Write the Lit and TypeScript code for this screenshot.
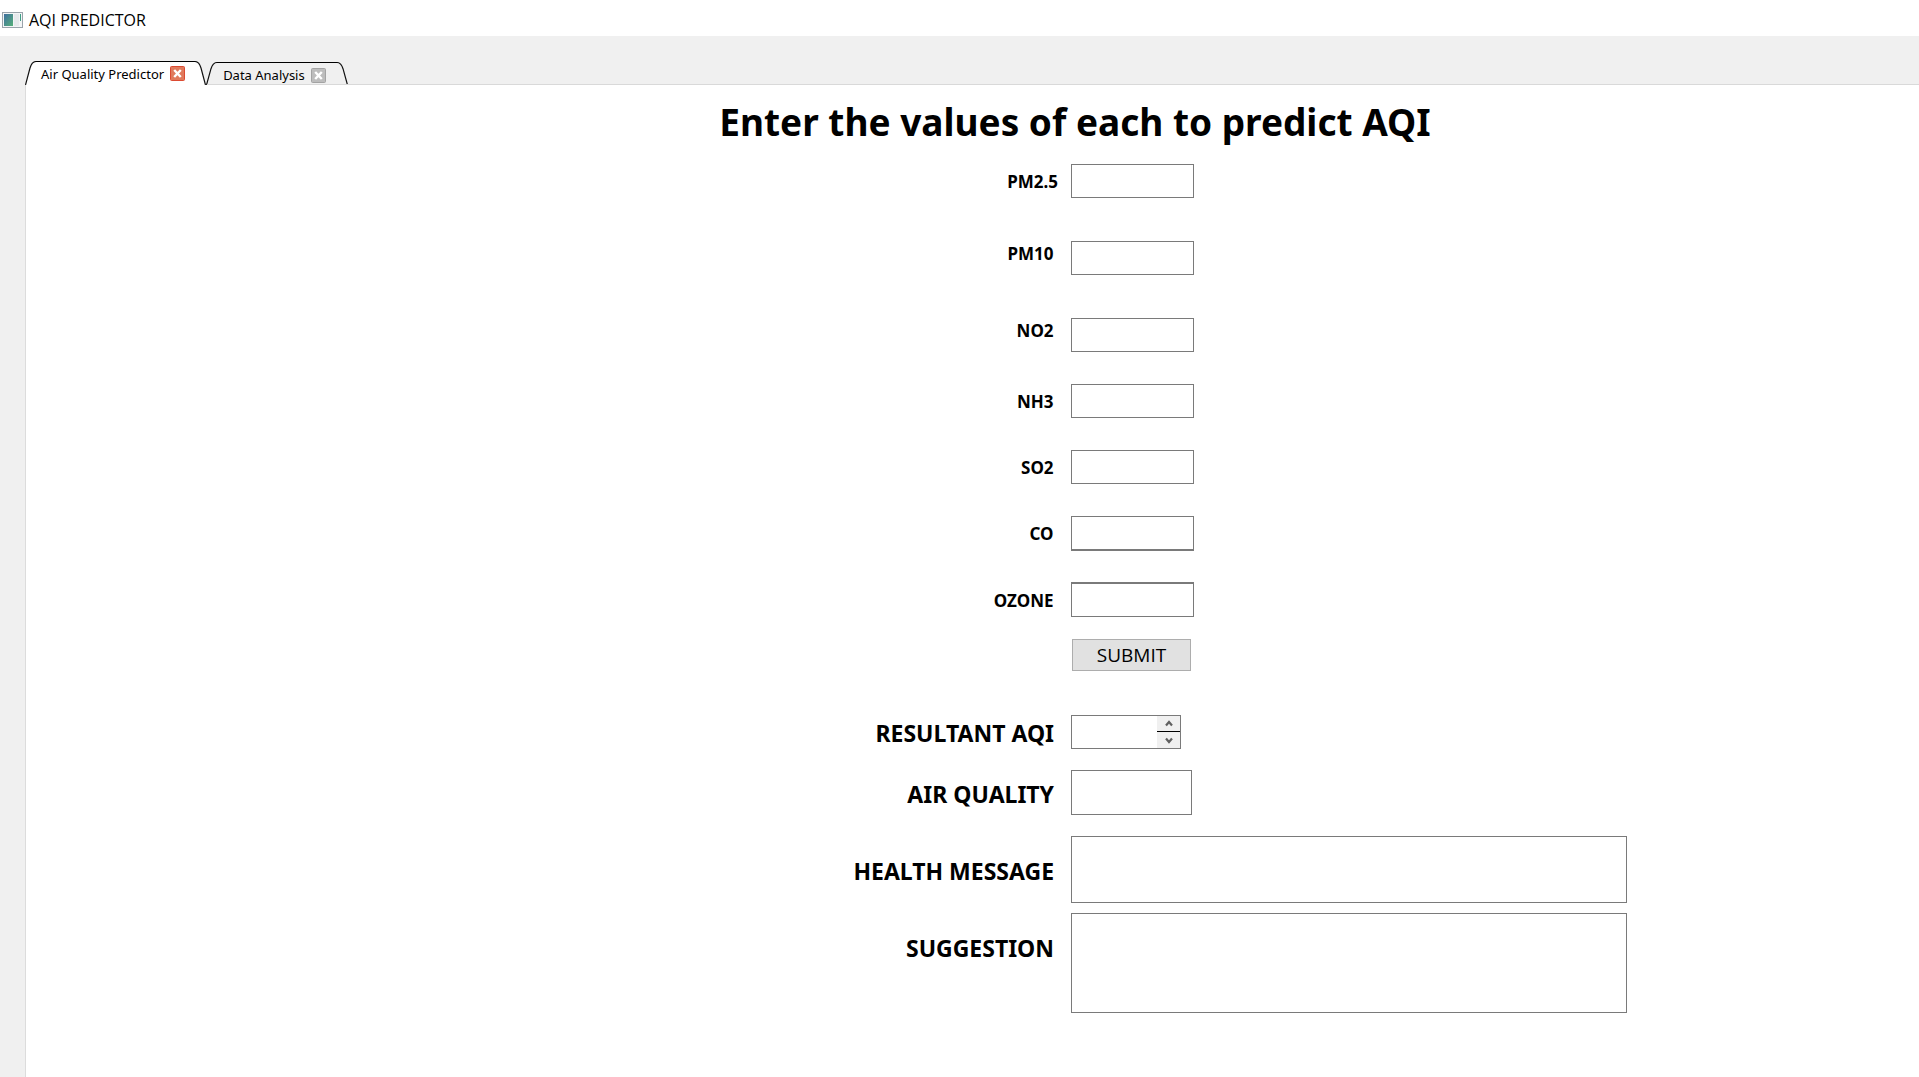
import { LitElement, html, css, svg, nothing } from "lit";
import { customElement, property, state } from "lit/decorators.js";
import { classMap } from "lit/directives/class-map.js";

interface Pollutant {
  id: string;
  label: string;
  spaced?: boolean;
  raised?: boolean;
  edge?: "top" | "bottom";
}

const POLLUTANTS: Pollutant[] = [
  { id: "pm25", label: "PM2.5", spaced: true },
  { id: "pm10", label: "PM10 ", spaced: true, raised: true },
  { id: "no2", label: "NO2 ", raised: true },
  { id: "nh3", label: "NH3 " },
  { id: "so2", label: "SO2 " },
  { id: "co", label: "CO ", edge: "bottom" },
  { id: "ozone", label: "OZONE ", edge: "top" },
];

@customElement("aqi-tab")
export class AqiTab extends LitElement {
  @property() label = "";
  @property({ type: Boolean, reflect: true }) active = false;

  static styles = css`
    :host {
      display: flex;
      height: 23px;
      color: #000;
    }
    :host([active]) {
      height: 24px;
    }
    .cap {
      flex: none;
      width: 11px;
      height: 100%;
      display: block;
    }
    .fill {
      fill: #f0f0f0;
    }
    .line {
      fill: none;
      stroke: #111;
      stroke-width: 1.2;
    }
    .body {
      display: flex;
      align-items: center;
      gap: 6px;
      padding: 2px 11px 0 6px;
      border-top: 1px solid #000;
      background: #f0f0f0;
    }
    :host([active]) .body {
      background: #fff;
      padding: 0 10px 0 5px;
    }
    :host([active]) .fill {
      fill: #fff;
    }
    button {
      margin: 0;
      padding: 0;
      border: 0;
      background: none;
      font: inherit;
      color: inherit;
    }
    .name {
      font-size: 13px;
      line-height: 20px;
      white-space: nowrap;
    }
    .close {
      width: 15px;
      height: 15px;
    }
    .close svg {
      display: block;
    }
    .box {
      fill: #bdbdbd;
      stroke: #a3a3a3;
    }
    :host([active]) .box {
      fill: #e07a5c;
      stroke: #dc4a32;
    }
    .cross {
      stroke: #fff;
      stroke-width: 2.4;
    }
  `;

  render() {
    return html`
      <svg class="cap" viewBox="0 0 11 24" preserveAspectRatio="none" aria-hidden="true">
        <path class="fill" d="M0 24 L5 6 Q7 0.5 11 0.5 V24 Z" />
        <path class="line" d="M0.5 24 L5 7 Q7 0.5 11 0.5" />
      </svg>
      <div class="body">
        <button class="name" role="tab" aria-selected=${this.active ? "true" : "false"}>${this.label}</button>
        <button class="close" aria-label="Close ${this.label}">
          <svg width="15" height="15" viewBox="0 0 15 15">
            <rect class="box" x="0.5" y="0.5" width="14" height="14" rx="1" />
            <path class="cross" d="M4.2 4 L10.8 11 M10.8 4 L4.2 11" />
          </svg>
        </button>
      </div>
      <svg class="cap" viewBox="0 0 11 24" preserveAspectRatio="none" aria-hidden="true">
        <path class="fill" d="M11 24 L6 6 Q4 0.5 0 0.5 V24 Z" />
        <path class="line" d="M10.5 24 L6 7 Q4 0.5 0 0.5" />
      </svg>
    `;
  }
}

@customElement("app-root")
export class AppRoot extends LitElement {
  @state() private selected = 0;

  static styles = css`
    :host {
      display: flex;
      flex-direction: column;
      min-height: 100vh;
      background: #f0f0f0;
      color: #000;
      font-family: "Noto Sans", "DejaVu Sans", sans-serif;
    }
    * {
      box-sizing: border-box;
    }
    .titlebar {
      display: flex;
      align-items: center;
      gap: 6px;
      height: 36px;
      padding: 3px 2px 0;
      background: #fff;
      font-family: "Open Sans", sans-serif;
      font-size: 16px;
      line-height: 22px;
    }
    .tabs {
      display: flex;
      align-items: flex-end;
      height: 49px;
      padding-left: 25px;
    }
    .panel {
      flex: 1;
      margin: -1px 0 0 25px;
      padding: 11px 0 64px 197px;
      border-left: 1px solid #dcdcdc;
      background: #fff;
    }
    .rule {
      height: 2px;
      margin: -1px 0 0 207px;
      background: #d9d9d9;
    }
    h1 {
      margin: 0 0 16px 8px;
      font-size: 37px;
      line-height: 52px;
      font-weight: 700;
      text-align: center;
    }
    .row {
      display: grid;
      grid-template-columns: 1fr 1fr;
      align-items: center;
      margin-bottom: 32px;
    }
    .row.spaced {
      margin-bottom: 43px;
    }
    .row.group {
      margin-bottom: 21px;
    }
    .row.close {
      margin-bottom: 10px;
    }
    label {
      padding: 2px 13px 0 0;
      font-size: 17px;
      line-height: 24px;
      font-weight: 700;
      text-align: right;
      white-space: pre;
    }
    label.raised {
      padding: 0 13px 8px 0;
    }
    label.large {
      padding-right: 11px;
      font-size: 23px;
      line-height: 30px;
    }
    label.high {
      padding-bottom: 32px;
    }
    input,
    textarea,
    .spin {
      display: block;
      width: 123px;
      height: 34px;
      margin: 0;
      padding: 0 6px;
      border: 1px solid #7a7a7a;
      border-radius: 0;
      background: #fff;
      font: 16px "Noto Sans", sans-serif;
      outline: none;
      resize: none;
    }
    input.top {
      height: 35px;
      border-top-width: 2px;
    }
    input.bottom {
      height: 35px;
      margin-bottom: -1px;
      border-bottom-width: 2px;
    }
    textarea.quality {
      width: 121px;
      height: 45px;
    }
    textarea.message {
      width: 100%;
      max-width: 556px;
      height: 67px;
    }
    textarea.suggestion {
      width: 100%;
      max-width: 556px;
      height: 100px;
    }
    .spin {
      display: flex;
      width: 110px;
      padding: 0;
    }
    .spin input {
      flex: 1;
      min-width: 0;
      width: auto;
      height: 100%;
      border: 0;
      appearance: textfield;
    }
    .spin input::-webkit-inner-spin-button {
      display: none;
    }
    .steps {
      display: flex;
      flex-direction: column;
      width: 23px;
      background: #f0f0f0;
    }
    .steps button {
      display: grid;
      place-items: center;
      flex: 1;
      padding: 0;
      border: 0;
      background: none;
    }
    .steps button:first-child {
      flex: none;
      height: 16px;
      border-bottom: 1px solid #000;
    }
    .submit {
      grid-column: 2;
      justify-self: start;
      width: 119px;
      height: 32px;
      margin-left: 1px;
      padding: 0;
      border: 1px solid #adadad;
      background: #e1e1e1;
      color: #000;
      font: 19px/24px "Open Sans", sans-serif;
    }
    .actions {
      margin: -10px 0 44px;
    }
  `;

  private appIcon() {
    return svg`
      <svg width="21" height="16" viewBox="0 0 21 16" aria-hidden="true">
        <defs>
          <linearGradient id="pane" x1="0" y1="0" x2="1" y2="1">
            <stop offset="0" stop-color="#3f6fa0" />
            <stop offset="1" stop-color="#56b079" />
          </linearGradient>
        </defs>
        <rect x="0.5" y="0.5" width="20" height="15" fill="#f3f5f6" stroke="#9aa3ab" />
        <rect x="2" y="2" width="9" height="12" fill="url(#pane)" />
        <rect x="12" y="2" width="5" height="12" fill="#e6e9ec" />
        <rect x="18" y="2" width="1" height="7" fill="#3f9d84" />
      </svg>`;
  }

  private chevron(up: boolean) {
    return html`<svg width="8" height="7" viewBox="0 0 8 7" aria-hidden="true">
      <path d=${up ? "M1 5.5 L4 2 L7 5.5" : "M1 1.5 L4 5 L7 1.5"} fill="none" stroke="#606060" stroke-width="2.2" />
    </svg>`;
  }

  private pollutantRow(p: Pollutant) {
    return html`
      <div class=${classMap({ row: true, spaced: !!p.spaced })}>
        <label for=${p.id} class=${p.raised ? "raised" : nothing}>${p.label}</label>
        <input id=${p.id} type="text" class=${p.edge ?? nothing} />
      </div>
    `;
  }

  render() {
    return html`
      <header class="titlebar">${this.appIcon()}<span>AQI PREDICTOR</span></header>
      <nav class="tabs" role="tablist">
        ${["Air Quality Predictor", "Data Analysis"].map(
          (name, i) => html`<aqi-tab label=${name} ?active=${i === this.selected}></aqi-tab>`
        )}
      </nav>
      <div class="rule"></div>
      <main class="panel">
        <h1>Enter the values of each to predict AQI</h1>
        <form @submit=${(e: Event) => e.preventDefault()}>
          ${POLLUTANTS.map((p) => this.pollutantRow(p))}
          <div class="row actions"><button class="submit">SUBMIT</button></div>
          <div class="row group">
            <label class="large" for="result">RESULTANT AQI </label>
            <div class="spin">
              <input id="result" type="number" />
              <div class="steps">
                <button type="button" aria-label="Increase">${this.chevron(true)}</button>
                <button type="button" aria-label="Decrease">${this.chevron(false)}</button>
              </div>
            </div>
          </div>
          <div class="row group">
            <label class="large" for="quality">AIR QUALITY </label>
            <textarea id="quality" class="quality"></textarea>
          </div>
          <div class="row close">
            <label class="large" for="message">HEALTH MESSAGE </label>
            <textarea id="message" class="message"></textarea>
          </div>
          <div class="row close">
            <label class="large high" for="suggestion">SUGGESTION </label>
            <textarea id="suggestion" class="suggestion"></textarea>
          </div>
        </form>
      </main>
    `;
  }
}
